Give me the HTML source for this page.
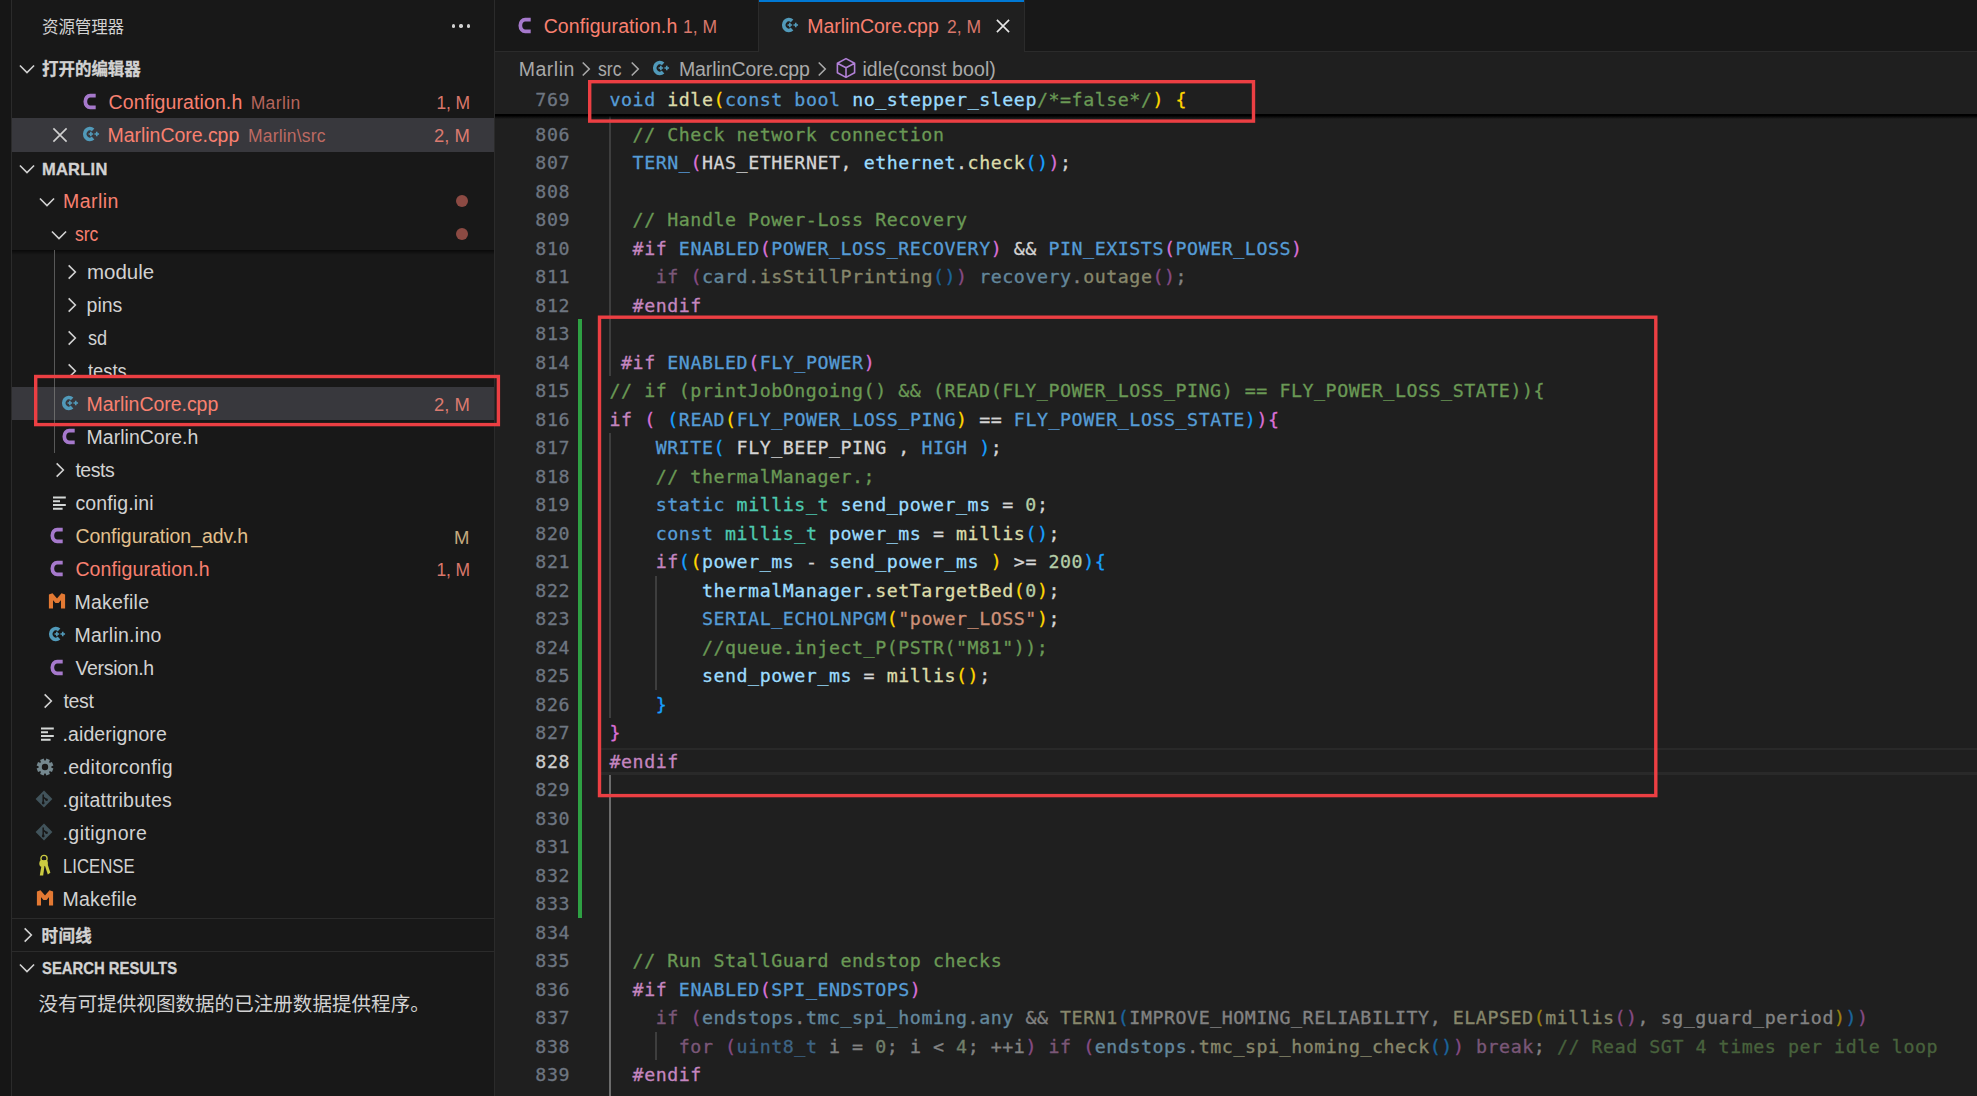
<!DOCTYPE html>
<html lang="zh-CN"><head><meta charset="utf-8"><title>MarlinCore.cpp - Marlin</title><style>
html,body{margin:0;padding:0;background:#1f1f1f}
body{width:1977px;height:1096px;overflow:hidden;position:relative;background:#1f1f1f;font-family:"Liberation Sans","Noto Sans CJK SC",sans-serif;-webkit-font-smoothing:antialiased}
.b{position:absolute;display:block}
.t{position:absolute;white-space:pre;font-family:"Liberation Sans","Noto Sans CJK SC",sans-serif}
.ln{position:absolute;left:500px;width:70px;text-align:right;height:28.5px;line-height:28.5px;font-family:"DejaVu Sans Mono","Liberation Mono",monospace;font-size:18.3px;letter-spacing:0.5438px;white-space:pre;-webkit-text-stroke-width:.3px}
.cl{position:absolute;left:609.5px;height:28.5px;line-height:28.5px;font-family:"DejaVu Sans Mono","Liberation Mono",monospace;font-size:18.3px;letter-spacing:0.5438px;white-space:pre;color:#d4d4d4;-webkit-text-stroke-width:.3px}
.dim{opacity:.55}
</style></head>
<body>
<div class="b" style="left:0px;top:0px;width:12px;height:1096px;background:#161616;"></div>
<div class="b" style="left:11px;top:0px;width:1px;height:1096px;background:#2b2b2b;"></div>
<div class="b" style="left:12px;top:0px;width:482px;height:1096px;background:#181818;"></div>
<div class="b" style="left:494px;top:0px;width:1px;height:1096px;background:#2b2b2b;"></div>
<div class="b" style="left:451.9px;top:24.4px;width:3.3px;height:3.3px;border-radius:50%;background:#d2d2d2"></div>
<div class="b" style="left:459.4px;top:24.4px;width:3.3px;height:3.3px;border-radius:50%;background:#d2d2d2"></div>
<div class="b" style="left:466.9px;top:24.4px;width:3.3px;height:3.3px;border-radius:50%;background:#d2d2d2"></div>
<svg class="b" style="left:17px;top:59px;" width="20" height="20" viewBox="0 0 20 20"><path d="M2.93 6.47 L10 13.53 L17.07 6.47" fill="none" stroke="#d2d2d2" stroke-width="1.6"/></svg>
<svg class="b" style="left:79.8px;top:92px;" width="20" height="20" viewBox="0 0 20 20"><path transform="translate(9.6 9.5)" d="M6.1 -5.95H0.6A4.85 5.6 0 0 0 -4.25 -0.35V0.35A4.85 5.6 0 0 0 0.6 5.95H6.1" fill="none" stroke="#a679cc" stroke-width="3.7"/></svg>
<div class="b" style="left:12px;top:117.8px;width:482px;height:33.8px;background:#38383d;"></div>
<svg class="b" style="left:50.1px;top:124.9px;" width="20" height="20" viewBox="0 0 20 20"><path d="M3.40 3.40 L16.60 16.60 M16.60 3.40 L3.40 16.60" fill="none" stroke="#d0d0d0" stroke-width="1.6"/></svg>
<svg class="b" style="left:78.6px;top:124.0px;" width="24" height="20" viewBox="0 0 24 20"><g transform="translate(10.85 10)" fill="none" stroke="#519aba"><path d="M3.27 -4.19A5.05 5.5 0 1 0 3.27 4.19" stroke-width="3.7"/><path d="M-1.3 0h4.6M1 -2.3v4.6M4.6 0h4.6M6.9 -2.3v4.6" stroke-width="1.6"/></g></svg>
<svg class="b" style="left:17px;top:158.7px;" width="20" height="20" viewBox="0 0 20 20"><path d="M2.93 6.47 L10 13.53 L17.07 6.47" fill="none" stroke="#d2d2d2" stroke-width="1.6"/></svg>
<svg class="b" style="left:36.5px;top:191.6px;" width="20" height="20" viewBox="0 0 20 20"><path d="M2.93 6.47 L10 13.53 L17.07 6.47" fill="none" stroke="#d2d2d2" stroke-width="1.6"/></svg>
<div class="b" style="left:456px;top:194.6px;width:12px;height:12px;border-radius:50%;background:#8c4a43"></div>
<svg class="b" style="left:48.5px;top:224.6px;" width="20" height="20" viewBox="0 0 20 20"><path d="M2.93 6.47 L10 13.53 L17.07 6.47" fill="none" stroke="#d2d2d2" stroke-width="1.6"/></svg>
<div class="b" style="left:456px;top:227.5px;width:12px;height:12px;border-radius:50%;background:#8c4a43"></div>
<div class="b" style="left:12px;top:250.3px;width:482px;height:5px;background:linear-gradient(rgba(0,0,0,.6),rgba(0,0,0,0));"></div>
<div class="b" style="left:54px;top:250.3px;width:1.2px;height:203.2px;background:#585858;"></div>
<svg class="b" style="left:61.5px;top:262.3px;" width="20" height="20" viewBox="0 0 20 20"><path d="M6.66 3.31 L13.34 10 L6.66 16.69" fill="none" stroke="#d2d2d2" stroke-width="1.6"/></svg>
<svg class="b" style="left:61.5px;top:295.3px;" width="20" height="20" viewBox="0 0 20 20"><path d="M6.66 3.31 L13.34 10 L6.66 16.69" fill="none" stroke="#d2d2d2" stroke-width="1.6"/></svg>
<svg class="b" style="left:61.5px;top:328.3px;" width="20" height="20" viewBox="0 0 20 20"><path d="M6.66 3.31 L13.34 10 L6.66 16.69" fill="none" stroke="#d2d2d2" stroke-width="1.6"/></svg>
<svg class="b" style="left:61.5px;top:361.3px;" width="20" height="20" viewBox="0 0 20 20"><path d="M6.66 3.31 L13.34 10 L6.66 16.69" fill="none" stroke="#d2d2d2" stroke-width="1.6"/></svg>
<div class="b" style="left:34px;top:375px;width:460px;height:12px;background:#181818;"></div>
<div class="b" style="left:54px;top:375px;width:1.2px;height:12px;background:#585858;"></div>
<div class="b" style="left:12px;top:387px;width:482px;height:33px;background:#38383d;"></div>
<div class="b" style="left:54px;top:387px;width:1.2px;height:33px;background:#6a6a6a;"></div>
<svg class="b" style="left:57.8px;top:393.1px;" width="24" height="20" viewBox="0 0 24 20"><g transform="translate(10.85 10)" fill="none" stroke="#519aba"><path d="M3.27 -4.19A5.05 5.5 0 1 0 3.27 4.19" stroke-width="3.7"/><path d="M-1.3 0h4.6M1 -2.3v4.6M4.6 0h4.6M6.9 -2.3v4.6" stroke-width="1.6"/></g></svg>
<svg class="b" style="left:58.8px;top:426.7px;" width="20" height="20" viewBox="0 0 20 20"><path transform="translate(9.6 9.5)" d="M6.1 -5.95H0.6A4.85 5.6 0 0 0 -4.25 -0.35V0.35A4.85 5.6 0 0 0 0.6 5.95H6.1" fill="none" stroke="#a679cc" stroke-width="3.7"/></svg>
<svg class="b" style="left:49.5px;top:460.3px;" width="20" height="20" viewBox="0 0 20 20"><path d="M6.66 3.31 L13.34 10 L6.66 16.69" fill="none" stroke="#d2d2d2" stroke-width="1.6"/></svg>
<svg class="b" style="left:53.1px;top:494.6px;" width="16" height="18" viewBox="0 0 16 18"><path d="M0 2.6h12.8M0 6.3h7M0 10h12.8M0 13.8h9.6" stroke="#d4d7d6" stroke-width="2" fill="none"/></svg>
<svg class="b" style="left:46.9px;top:525.8px;" width="20" height="20" viewBox="0 0 20 20"><path transform="translate(9.6 9.5)" d="M6.1 -5.95H0.6A4.85 5.6 0 0 0 -4.25 -0.35V0.35A4.85 5.6 0 0 0 0.6 5.95H6.1" fill="none" stroke="#a679cc" stroke-width="3.7"/></svg>
<svg class="b" style="left:46.9px;top:558.8px;" width="20" height="20" viewBox="0 0 20 20"><path transform="translate(9.6 9.5)" d="M6.1 -5.95H0.6A4.85 5.6 0 0 0 -4.25 -0.35V0.35A4.85 5.6 0 0 0 0.6 5.95H6.1" fill="none" stroke="#a679cc" stroke-width="3.7"/></svg>
<svg class="b" style="left:46.6px;top:591.3px;" width="20" height="20" viewBox="0 0 20 20"><path d="M3.95 17.4V3.6L10 10.6L16.05 3.6V17.4" fill="none" stroke="#e37933" stroke-width="4.1" stroke-linejoin="miter" stroke-miterlimit="1.2"/></svg>
<svg class="b" style="left:45.2px;top:623.7px;" width="24" height="20" viewBox="0 0 24 20"><g transform="translate(10.85 10)" fill="none" stroke="#519aba"><path d="M3.27 -4.19A5.05 5.5 0 1 0 3.27 4.19" stroke-width="3.7"/><path d="M-1.3 0h4.6M1 -2.3v4.6M4.6 0h4.6M6.9 -2.3v4.6" stroke-width="1.6"/></g></svg>
<svg class="b" style="left:46.9px;top:657.8px;" width="20" height="20" viewBox="0 0 20 20"><path transform="translate(9.6 9.5)" d="M6.1 -5.95H0.6A4.85 5.6 0 0 0 -4.25 -0.35V0.35A4.85 5.6 0 0 0 0.6 5.95H6.1" fill="none" stroke="#a679cc" stroke-width="3.7"/></svg>
<svg class="b" style="left:37.7px;top:691.3px;" width="20" height="20" viewBox="0 0 20 20"><path d="M6.66 3.31 L13.34 10 L6.66 16.69" fill="none" stroke="#d2d2d2" stroke-width="1.6"/></svg>
<svg class="b" style="left:41px;top:725.9px;" width="16" height="18" viewBox="0 0 16 18"><path d="M0 2.6h12.8M0 6.3h7M0 10h12.8M0 13.8h9.6" stroke="#d4d7d6" stroke-width="2" fill="none"/></svg>
<svg class="b" style="left:34.6px;top:756.6px;" width="20" height="20" viewBox="0 0 20 20"><g transform="translate(10 10)" fill="#75888f"><rect x="-1.9" y="-8.3" width="3.8" height="4" transform="rotate(22.5)"/><rect x="-1.9" y="-8.3" width="3.8" height="4" transform="rotate(67.5)"/><rect x="-1.9" y="-8.3" width="3.8" height="4" transform="rotate(112.5)"/><rect x="-1.9" y="-8.3" width="3.8" height="4" transform="rotate(157.5)"/><rect x="-1.9" y="-8.3" width="3.8" height="4" transform="rotate(202.5)"/><rect x="-1.9" y="-8.3" width="3.8" height="4" transform="rotate(247.5)"/><rect x="-1.9" y="-8.3" width="3.8" height="4" transform="rotate(292.5)"/><rect x="-1.9" y="-8.3" width="3.8" height="4" transform="rotate(337.5)"/><path fill-rule="evenodd" d="M0 -6.4A6.4 6.4 0 1 0 0 6.4A6.4 6.4 0 1 0 0 -6.4ZM0 -3.2A3.2 3.2 0 1 1 0 3.2A3.2 3.2 0 1 1 0 -3.2Z"/></g></svg>
<svg class="b" style="left:34.1px;top:789.4px;" width="20" height="20" viewBox="0 0 20 20"><path d="M10 1.6L18.4 10L10 18.4L1.6 10Z" fill="#41535b"/><path d="M9.2 5.6V13.6M9.2 8.2L12.4 10.6" stroke="#181818" stroke-width="1.5" fill="none"/><circle cx="9.2" cy="14" r="1.4" fill="#181818"/><circle cx="12.6" cy="10.8" r="1.3" fill="#181818"/></svg>
<svg class="b" style="left:34.1px;top:822.4px;" width="20" height="20" viewBox="0 0 20 20"><path d="M10 1.6L18.4 10L10 18.4L1.6 10Z" fill="#41535b"/><path d="M9.2 5.6V13.6M9.2 8.2L12.4 10.6" stroke="#181818" stroke-width="1.5" fill="none"/><circle cx="9.2" cy="14" r="1.4" fill="#181818"/><circle cx="12.6" cy="10.8" r="1.3" fill="#181818"/></svg>
<svg class="b" style="left:34.0px;top:852.9px;" width="20" height="24" viewBox="0 0 20 24"><circle cx="10" cy="5.4" r="3.1" fill="none" stroke="#cbcb41" stroke-width="1.3"/><path d="M8.4 7 L5.8 22.6 L9.2 22.6 L10.6 12 Z" fill="#cbcb41"/><path d="M9.4 8 L12.2 7 L16.4 19.8 L13.8 21.6 Z" fill="#cbcb41"/><ellipse cx="8.2" cy="10.4" rx="2.9" ry="3.4" fill="#cbcb41"/><ellipse cx="11.4" cy="10" rx="2.5" ry="3" fill="#cbcb41"/></svg>
<svg class="b" style="left:34.6px;top:888.2px;" width="20" height="20" viewBox="0 0 20 20"><path d="M3.95 17.4V3.6L10 10.6L16.05 3.6V17.4" fill="none" stroke="#e37933" stroke-width="4.1" stroke-linejoin="miter" stroke-miterlimit="1.2"/></svg>
<div class="b" style="left:12px;top:917.5px;width:482px;height:1.2px;background:#2b2b2b;"></div>
<svg class="b" style="left:17.7px;top:925px;" width="20" height="20" viewBox="0 0 20 20"><path d="M6.66 3.31 L13.34 10 L6.66 16.69" fill="none" stroke="#d2d2d2" stroke-width="1.6"/></svg>
<div class="b" style="left:12px;top:950.8px;width:482px;height:1.2px;background:#2b2b2b;"></div>
<svg class="b" style="left:17px;top:958.3px;" width="20" height="20" viewBox="0 0 20 20"><path d="M2.93 6.47 L10 13.53 L17.07 6.47" fill="none" stroke="#d2d2d2" stroke-width="1.6"/></svg>
<div class="b" style="left:495px;top:0px;width:1482px;height:50.8px;background:#181818;"></div>
<div class="b" style="left:495px;top:50.8px;width:1482px;height:1.2px;background:#2b2b2b;"></div>
<div class="b" style="left:757.8px;top:0px;width:1.2px;height:52px;background:#2b2b2b;"></div>
<div class="b" style="left:759px;top:0px;width:264.6px;height:52px;background:#1f1f1f;"></div>
<div class="b" style="left:759px;top:0px;width:264.6px;height:1.5px;background:#0078d4;"></div>
<div class="b" style="left:1023.6px;top:0px;width:1.2px;height:52px;background:#2b2b2b;"></div>
<svg class="b" style="left:514.7px;top:15.7px;" width="20" height="20" viewBox="0 0 20 20"><path transform="translate(9.6 9.5)" d="M6.1 -5.95H0.6A4.85 5.6 0 0 0 -4.25 -0.35V0.35A4.85 5.6 0 0 0 0.6 5.95H6.1" fill="none" stroke="#a679cc" stroke-width="3.7"/></svg>
<svg class="b" style="left:778.2px;top:14.8px;" width="24" height="20" viewBox="0 0 24 20"><g transform="translate(10.85 10)" fill="none" stroke="#519aba"><path d="M3.27 -4.19A5.05 5.5 0 1 0 3.27 4.19" stroke-width="3.7"/><path d="M-1.3 0h4.6M1 -2.3v4.6M4.6 0h4.6M6.9 -2.3v4.6" stroke-width="1.6"/></g></svg>
<svg class="b" style="left:992.5px;top:16.2px;" width="20" height="20" viewBox="0 0 20 20"><path d="M3.90 3.90 L16.10 16.10 M16.10 3.90 L3.90 16.10" fill="none" stroke="#e6e6e6" stroke-width="1.6"/></svg>
<svg class="b" style="left:576.2px;top:59.2px;" width="20" height="20" viewBox="0 0 20 20"><path d="M6.73 3.46 L13.27 10 L6.73 16.54" fill="none" stroke="#a9a9a9" stroke-width="1.6"/></svg>
<svg class="b" style="left:624.6px;top:59.2px;" width="20" height="20" viewBox="0 0 20 20"><path d="M6.73 3.46 L13.27 10 L6.73 16.54" fill="none" stroke="#a9a9a9" stroke-width="1.6"/></svg>
<svg class="b" style="left:649.4px;top:58.0px;" width="24" height="20" viewBox="0 0 24 20"><g transform="translate(10.85 10)" fill="none" stroke="#519aba"><path d="M3.27 -4.19A5.05 5.5 0 1 0 3.27 4.19" stroke-width="3.7"/><path d="M-1.3 0h4.6M1 -2.3v4.6M4.6 0h4.6M6.9 -2.3v4.6" stroke-width="1.6"/></g></svg>
<svg class="b" style="left:812.3px;top:59.2px;" width="20" height="20" viewBox="0 0 20 20"><path d="M6.73 3.46 L13.27 10 L6.73 16.54" fill="none" stroke="#a9a9a9" stroke-width="1.6"/></svg>
<svg class="b" style="left:835.2px;top:56.8px;" width="22" height="22" viewBox="0 0 22 22"><path d="M11 1.6L19.6 6.2V15.8L11 20.4L2.4 15.8V6.2ZM2.4 6.2L11 10.8L19.6 6.2M11 10.8V20.4" fill="none" stroke="#b180d7" stroke-width="1.6" stroke-linejoin="round"/></svg>
<div class="b" style="left:608.9px;top:91.25px;width:1.9px;height:285.0px;background:#3e3e3e;"></div>
<div class="b" style="left:608.9px;top:433.25px;width:1.9px;height:285.0px;background:#3e3e3e;"></div>
<div class="b" style="left:608.9px;top:775.25px;width:1.9px;height:342.0px;background:#6c6c6c;"></div>
<div class="b" style="left:655.1px;top:575.75px;width:1.9px;height:114.0px;background:#3e3e3e;"></div>
<div class="b" style="left:655.1px;top:1031.75px;width:1.9px;height:28.5px;background:#3e3e3e;"></div>
<div class="b" style="left:598px;top:747.8px;width:1379px;height:2.4px;background:#292929;"></div>
<div class="b" style="left:598px;top:772.4px;width:1379px;height:2.4px;background:#292929;"></div>
<div class="b" style="left:578px;top:319.25px;width:4.3px;height:598.5px;background:#2ea043;"></div>
<span class="t" style="left:42.00px;top:11.00px;line-height:33px;font-size:16.5px;color:#d2d2d2;font-weight:normal;letter-spacing:-0.100px;">资源管理器</span>
<span class="t" style="left:42.00px;top:53.00px;line-height:33px;font-size:16.5px;color:#d2d2d2;font-weight:bold;letter-spacing:-0.040px;-webkit-text-stroke-width:.3px;">打开的编辑器</span>
<span class="t" style="left:108.60px;top:85.50px;line-height:33px;font-size:19.5px;color:#f88070;font-weight:normal;letter-spacing:0.099px;">Configuration.h</span>
<span class="t" style="left:250.70px;top:87.30px;line-height:33px;font-size:17.5px;color:#b5655c;font-weight:normal;letter-spacing:0.357px;">Marlin</span>
<span class="t" style="left:436.40px;top:87.10px;line-height:33px;font-size:17.5px;color:#d9776b;font-weight:normal;letter-spacing:-0.086px;">1, M</span>
<span class="t" style="left:107.60px;top:118.50px;line-height:33px;font-size:19.5px;color:#f88070;font-weight:normal;letter-spacing:-0.044px;">MarlinCore.cpp</span>
<span class="t" style="left:248.00px;top:120.30px;line-height:33px;font-size:17.5px;color:#bd6a62;font-weight:normal;letter-spacing:0.190px;">Marlin\src</span>
<span class="t" style="left:434.30px;top:120.10px;line-height:33px;font-size:17.5px;color:#db7a6f;font-weight:normal;transform:scaleX(1.0551);transform-origin:0 50%;">2, M</span>
<span class="t" style="left:42.00px;top:152.70px;line-height:33px;font-size:16.5px;color:#d2d2d2;font-weight:bold;letter-spacing:0.232px;-webkit-text-stroke-width:.3px;">MARLIN</span>
<span class="t" style="left:63.00px;top:184.50px;line-height:33px;font-size:19.5px;color:#f88070;font-weight:normal;letter-spacing:0.471px;">Marlin</span>
<span class="t" style="left:75.40px;top:217.50px;line-height:33px;font-size:19.5px;color:#f88070;font-weight:normal;transform:scaleX(0.8993);transform-origin:0 50%;">src</span>
<span class="t" style="left:86.55px;top:255.50px;line-height:33px;font-size:19.5px;color:#d2d2d2;font-weight:normal;transform:scaleX(1.0497);transform-origin:0 50%;">module</span>
<span class="t" style="left:86.60px;top:288.50px;line-height:33px;font-size:19.5px;color:#d2d2d2;font-weight:normal;letter-spacing:-0.007px;">pins</span>
<span class="t" style="left:87.60px;top:321.50px;line-height:33px;font-size:19.5px;color:#d2d2d2;font-weight:normal;transform:scaleX(0.9316);transform-origin:0 50%;">sd</span>
<span class="t" style="left:87.60px;top:354.50px;line-height:33px;font-size:19.5px;color:#d2d2d2;font-weight:normal;transform:scaleX(0.9389);transform-origin:0 50%;">tests</span>
<span class="t" style="left:86.60px;top:387.50px;line-height:33px;font-size:19.5px;color:#f88070;font-weight:normal;letter-spacing:-0.044px;">MarlinCore.cpp</span>
<span class="t" style="left:434.30px;top:389.10px;line-height:33px;font-size:17.5px;color:#db7a6f;font-weight:normal;transform:scaleX(1.0551);transform-origin:0 50%;">2, M</span>
<span class="t" style="left:86.60px;top:420.50px;line-height:33px;font-size:19.5px;color:#d2d2d2;font-weight:normal;letter-spacing:0.011px;">MarlinCore.h</span>
<span class="t" style="left:75.40px;top:453.50px;line-height:33px;font-size:19.5px;color:#d2d2d2;font-weight:normal;letter-spacing:-0.458px;">tests</span>
<span class="t" style="left:75.40px;top:486.50px;line-height:33px;font-size:19.5px;color:#d2d2d2;font-weight:normal;letter-spacing:0.141px;">config.ini</span>
<span class="t" style="left:75.40px;top:519.50px;line-height:33px;font-size:19.5px;color:#e2c08d;font-weight:normal;letter-spacing:-0.019px;">Configuration_adv.h</span>
<span class="t" style="left:454.05px;top:521.10px;line-height:33px;font-size:18.5px;color:#c4aa7f;font-weight:normal;">M</span>
<span class="t" style="left:75.40px;top:552.50px;line-height:33px;font-size:19.5px;color:#f88070;font-weight:normal;letter-spacing:0.135px;">Configuration.h</span>
<span class="t" style="left:436.40px;top:554.10px;line-height:33px;font-size:17.5px;color:#d9776b;font-weight:normal;letter-spacing:-0.086px;">1, M</span>
<span class="t" style="left:74.40px;top:585.50px;line-height:33px;font-size:19.5px;color:#d2d2d2;font-weight:normal;letter-spacing:0.291px;">Makefile</span>
<span class="t" style="left:74.40px;top:618.50px;line-height:33px;font-size:19.5px;color:#d2d2d2;font-weight:normal;letter-spacing:0.268px;">Marlin.ino</span>
<span class="t" style="left:75.40px;top:651.50px;line-height:33px;font-size:19.5px;color:#d2d2d2;font-weight:normal;letter-spacing:-0.320px;">Version.h</span>
<span class="t" style="left:63.40px;top:684.50px;line-height:33px;font-size:19.5px;color:#d2d2d2;font-weight:normal;letter-spacing:-0.304px;">test</span>
<span class="t" style="left:62.40px;top:717.50px;line-height:33px;font-size:19.5px;color:#d2d2d2;font-weight:normal;letter-spacing:0.133px;">.aiderignore</span>
<span class="t" style="left:62.40px;top:750.50px;line-height:33px;font-size:19.5px;color:#d2d2d2;font-weight:normal;letter-spacing:0.326px;">.editorconfig</span>
<span class="t" style="left:62.50px;top:783.50px;line-height:33px;font-size:19.5px;color:#d2d2d2;font-weight:normal;letter-spacing:0.233px;">.gitattributes</span>
<span class="t" style="left:62.50px;top:816.50px;line-height:33px;font-size:19.5px;color:#d2d2d2;font-weight:normal;letter-spacing:0.447px;">.gitignore</span>
<span class="t" style="left:62.64px;top:849.50px;line-height:33px;font-size:19.5px;color:#d2d2d2;font-weight:normal;transform:scaleX(0.8588);transform-origin:0 50%;">LICENSE</span>
<span class="t" style="left:62.50px;top:882.50px;line-height:33px;font-size:19.5px;color:#d2d2d2;font-weight:normal;letter-spacing:0.233px;">Makefile</span>
<span class="t" style="left:41.60px;top:919.80px;line-height:33px;font-size:16.5px;color:#d2d2d2;font-weight:bold;letter-spacing:0.350px;-webkit-text-stroke-width:.3px;">时间线</span>
<span class="t" style="left:41.90px;top:952.20px;line-height:33px;font-size:16.5px;color:#d2d2d2;font-weight:bold;-webkit-text-stroke-width:.3px;transform:scaleX(0.9005);transform-origin:0 50%;">SEARCH RESULTS</span>
<span class="t" style="left:38.50px;top:988.10px;line-height:33px;font-size:19.5px;color:#d2d2d2;font-weight:normal;letter-spacing:0.063px;">没有可提供视图数据的已注册数据提供程序。</span>
<span class="t" style="left:543.70px;top:10.20px;line-height:33px;font-size:19.5px;color:#f88070;font-weight:normal;letter-spacing:0.092px;">Configuration.h</span>
<span class="t" style="left:683.00px;top:10.50px;line-height:33px;font-size:17.5px;color:#d9776b;font-weight:normal;letter-spacing:0.014px;">1, M</span>
<span class="t" style="left:807.30px;top:10.20px;line-height:33px;font-size:19.5px;color:#f88070;font-weight:normal;letter-spacing:-0.059px;">MarlinCore.cpp</span>
<span class="t" style="left:947.00px;top:10.50px;line-height:33px;font-size:17.5px;color:#d9776b;font-weight:normal;letter-spacing:-0.019px;">2, M</span>
<span class="t" style="left:518.80px;top:52.80px;line-height:33px;font-size:19.5px;color:#a9a9a9;font-weight:normal;letter-spacing:0.491px;">Marlin</span>
<span class="t" style="left:598.30px;top:52.80px;line-height:33px;font-size:19.5px;color:#a9a9a9;font-weight:normal;transform:scaleX(0.9031);transform-origin:0 50%;">src</span>
<span class="t" style="left:678.90px;top:52.80px;line-height:33px;font-size:19.5px;color:#a9a9a9;font-weight:normal;letter-spacing:-0.090px;">MarlinCore.cpp</span>
<span class="t" style="left:862.40px;top:52.80px;line-height:33px;font-size:19.5px;color:#a9a9a9;font-weight:normal;letter-spacing:0.077px;">idle(const bool)</span>
<div class="ln" style="top:120.65px;color:#6e7681">806</div>
<div class="cl" style="top:120.65px"><span style="color:#6a9955">  // Check network connection</span></div>
<div class="ln" style="top:149.15px;color:#6e7681">807</div>
<div class="cl" style="top:149.15px">  <span style="color:#569cd6">TERN_</span><span style="color:#da70d6">(</span><span style="color:#d4d4d4">HAS_ETHERNET, </span><span style="color:#9cdcfe">ethernet</span><span style="color:#d4d4d4">.</span><span style="color:#dcdcaa">check</span><span style="color:#179fff">()</span><span style="color:#da70d6">)</span><span style="color:#d4d4d4">;</span></div>
<div class="ln" style="top:177.65px;color:#6e7681">808</div>
<div class="ln" style="top:206.15px;color:#6e7681">809</div>
<div class="cl" style="top:206.15px"><span style="color:#6a9955">  // Handle Power-Loss Recovery</span></div>
<div class="ln" style="top:234.65px;color:#6e7681">810</div>
<div class="cl" style="top:234.65px">  <span style="color:#c586c0">#if</span> <span style="color:#569cd6">ENABLED</span><span style="color:#da70d6">(</span><span style="color:#569cd6">POWER_LOSS_RECOVERY</span><span style="color:#da70d6">)</span><span style="color:#d4d4d4"> &amp;&amp; </span><span style="color:#569cd6">PIN_EXISTS</span><span style="color:#da70d6">(</span><span style="color:#569cd6">POWER_LOSS</span><span style="color:#da70d6">)</span></div>
<div class="ln" style="top:263.15px;color:#6e7681">811</div>
<div class="cl dim" style="top:263.15px">    <span style="color:#c586c0">if</span> <span style="color:#da70d6">(</span><span style="color:#9cdcfe">card</span><span style="color:#d4d4d4">.</span><span style="color:#dcdcaa">isStillPrinting</span><span style="color:#179fff">()</span><span style="color:#da70d6">)</span> <span style="color:#9cdcfe">recovery</span><span style="color:#d4d4d4">.</span><span style="color:#dcdcaa">outage</span><span style="color:#da70d6">()</span><span style="color:#d4d4d4">;</span></div>
<div class="ln" style="top:291.65px;color:#6e7681">812</div>
<div class="cl" style="top:291.65px">  <span style="color:#c586c0">#endif</span></div>
<div class="ln" style="top:320.15px;color:#6e7681">813</div>
<div class="ln" style="top:348.65px;color:#6e7681">814</div>
<div class="cl" style="top:348.65px"> <span style="color:#c586c0">#if</span> <span style="color:#569cd6">ENABLED</span><span style="color:#da70d6">(</span><span style="color:#569cd6">FLY_POWER</span><span style="color:#da70d6">)</span></div>
<div class="ln" style="top:377.15px;color:#6e7681">815</div>
<div class="cl" style="top:377.15px"><span style="color:#6a9955">// if (printJobOngoing() &amp;&amp; (READ(FLY_POWER_LOSS_PING) == FLY_POWER_LOSS_STATE)){</span></div>
<div class="ln" style="top:405.65px;color:#6e7681">816</div>
<div class="cl" style="top:405.65px"><span style="color:#c586c0">if</span> <span style="color:#da70d6">(</span> <span style="color:#179fff">(</span><span style="color:#569cd6">READ</span><span style="color:#ffd700">(</span><span style="color:#569cd6">FLY_POWER_LOSS_PING</span><span style="color:#ffd700">)</span><span style="color:#d4d4d4"> == </span><span style="color:#569cd6">FLY_POWER_LOSS_STATE</span><span style="color:#179fff">)</span><span style="color:#da70d6">)</span><span style="color:#da70d6">{</span></div>
<div class="ln" style="top:434.15px;color:#6e7681">817</div>
<div class="cl" style="top:434.15px">    <span style="color:#569cd6">WRITE</span><span style="color:#179fff">(</span><span style="color:#d4d4d4"> FLY_BEEP_PING , </span><span style="color:#569cd6">HIGH</span> <span style="color:#179fff">)</span><span style="color:#d4d4d4">;</span></div>
<div class="ln" style="top:462.65px;color:#6e7681">818</div>
<div class="cl" style="top:462.65px"><span style="color:#6a9955">    // thermalManager.;</span></div>
<div class="ln" style="top:491.15px;color:#6e7681">819</div>
<div class="cl" style="top:491.15px">    <span style="color:#569cd6">static</span> <span style="color:#4ec9b0">millis_t</span> <span style="color:#9cdcfe">send_power_ms</span><span style="color:#d4d4d4"> = </span><span style="color:#b5cea8">0</span><span style="color:#d4d4d4">;</span></div>
<div class="ln" style="top:519.65px;color:#6e7681">820</div>
<div class="cl" style="top:519.65px">    <span style="color:#569cd6">const</span> <span style="color:#4ec9b0">millis_t</span> <span style="color:#9cdcfe">power_ms</span><span style="color:#d4d4d4"> = </span><span style="color:#dcdcaa">millis</span><span style="color:#179fff">()</span><span style="color:#d4d4d4">;</span></div>
<div class="ln" style="top:548.15px;color:#6e7681">821</div>
<div class="cl" style="top:548.15px">    <span style="color:#c586c0">if</span><span style="color:#179fff">(</span><span style="color:#ffd700">(</span><span style="color:#9cdcfe">power_ms</span><span style="color:#d4d4d4"> - </span><span style="color:#9cdcfe">send_power_ms</span> <span style="color:#ffd700">)</span><span style="color:#d4d4d4"> &gt;= </span><span style="color:#b5cea8">200</span><span style="color:#179fff">)</span><span style="color:#179fff">{</span></div>
<div class="ln" style="top:576.65px;color:#6e7681">822</div>
<div class="cl" style="top:576.65px">        <span style="color:#9cdcfe">thermalManager</span><span style="color:#d4d4d4">.</span><span style="color:#dcdcaa">setTargetBed</span><span style="color:#ffd700">(</span><span style="color:#b5cea8">0</span><span style="color:#ffd700">)</span><span style="color:#d4d4d4">;</span></div>
<div class="ln" style="top:605.15px;color:#6e7681">823</div>
<div class="cl" style="top:605.15px">        <span style="color:#569cd6">SERIAL_ECHOLNPGM</span><span style="color:#ffd700">(</span><span style="color:#ce9178">"power_LOSS"</span><span style="color:#ffd700">)</span><span style="color:#d4d4d4">;</span></div>
<div class="ln" style="top:633.65px;color:#6e7681">824</div>
<div class="cl" style="top:633.65px"><span style="color:#6a9955">        //queue.inject_P(PSTR("M81"));</span></div>
<div class="ln" style="top:662.15px;color:#6e7681">825</div>
<div class="cl" style="top:662.15px">        <span style="color:#9cdcfe">send_power_ms</span><span style="color:#d4d4d4"> = </span><span style="color:#dcdcaa">millis</span><span style="color:#ffd700">()</span><span style="color:#d4d4d4">;</span></div>
<div class="ln" style="top:690.65px;color:#6e7681">826</div>
<div class="cl" style="top:690.65px">    <span style="color:#179fff">}</span></div>
<div class="ln" style="top:719.15px;color:#6e7681">827</div>
<div class="cl" style="top:719.15px"><span style="color:#da70d6">}</span></div>
<div class="ln" style="top:747.65px;color:#cccccc">828</div>
<div class="cl" style="top:747.65px"><span style="color:#c586c0">#endif</span></div>
<div class="ln" style="top:776.15px;color:#6e7681">829</div>
<div class="ln" style="top:804.65px;color:#6e7681">830</div>
<div class="ln" style="top:833.15px;color:#6e7681">831</div>
<div class="ln" style="top:861.65px;color:#6e7681">832</div>
<div class="ln" style="top:890.15px;color:#6e7681">833</div>
<div class="ln" style="top:918.65px;color:#6e7681">834</div>
<div class="ln" style="top:947.15px;color:#6e7681">835</div>
<div class="cl" style="top:947.15px"><span style="color:#6a9955">  // Run StallGuard endstop checks</span></div>
<div class="ln" style="top:975.65px;color:#6e7681">836</div>
<div class="cl" style="top:975.65px">  <span style="color:#c586c0">#if</span> <span style="color:#569cd6">ENABLED</span><span style="color:#da70d6">(</span><span style="color:#569cd6">SPI_ENDSTOPS</span><span style="color:#da70d6">)</span></div>
<div class="ln" style="top:1004.15px;color:#6e7681">837</div>
<div class="cl dim" style="top:1004.15px">    <span style="color:#c586c0">if</span> <span style="color:#da70d6">(</span><span style="color:#9cdcfe">endstops</span><span style="color:#d4d4d4">.</span><span style="color:#9cdcfe">tmc_spi_homing</span><span style="color:#d4d4d4">.</span><span style="color:#9cdcfe">any</span><span style="color:#d4d4d4"> &amp;&amp; </span><span style="color:#dcdcaa">TERN1</span><span style="color:#179fff">(</span><span style="color:#d4d4d4">IMPROVE_HOMING_RELIABILITY, </span><span style="color:#dcdcaa">ELAPSED</span><span style="color:#ffd700">(</span><span style="color:#dcdcaa">millis</span><span style="color:#da70d6">()</span><span style="color:#d4d4d4">, sg_guard_period</span><span style="color:#ffd700">)</span><span style="color:#179fff">)</span><span style="color:#da70d6">)</span></div>
<div class="ln" style="top:1032.65px;color:#6e7681">838</div>
<div class="cl dim" style="top:1032.65px">      <span style="color:#c586c0">for</span> <span style="color:#da70d6">(</span><span style="color:#569cd6">uint8_t</span><span style="color:#d4d4d4"> i = </span><span style="color:#b5cea8">0</span><span style="color:#d4d4d4">; i &lt; </span><span style="color:#b5cea8">4</span><span style="color:#d4d4d4">; ++i</span><span style="color:#da70d6">)</span> <span style="color:#c586c0">if</span> <span style="color:#da70d6">(</span><span style="color:#9cdcfe">endstops</span><span style="color:#d4d4d4">.</span><span style="color:#dcdcaa">tmc_spi_homing_check</span><span style="color:#179fff">()</span><span style="color:#da70d6">)</span> <span style="color:#c586c0">break</span><span style="color:#d4d4d4">; </span><span style="color:#6a9955">// Read SGT 4 times per idle loop</span></div>
<div class="ln" style="top:1061.15px;color:#6e7681">839</div>
<div class="cl" style="top:1061.15px">  <span style="color:#c586c0">#endif</span></div>
<div class="b" style="left:495px;top:84.5px;width:1482px;height:29.3px;background:#1f1f1f"></div>
<div class="b" style="left:495px;top:113.8px;width:1482px;height:5.4px;background:linear-gradient(#000 0,#000 32%,rgba(0,0,0,0) 100%)"></div>
<div class="ln" style="top:86.20px;color:#6e7681">769</div>
<div class="cl" style="top:86.20px"><span style="color:#569cd6">void</span> <span style="color:#dcdcaa">idle</span><span style="color:#ffd700">(</span><span style="color:#569cd6">const</span> <span style="color:#569cd6">bool</span> <span style="color:#9cdcfe">no_stepper_sleep</span><span style="color:#6a9955">/*=false*/</span><span style="color:#ffd700">)</span> <span style="color:#ffd700">{</span></div>
<svg class="b" style="left:0;top:0" width="1977" height="1096"><rect x="589.70" y="81.70" width="663.80" height="39.40" fill="none" stroke="#ec3f43" stroke-width="3.4"/><rect x="599.50" y="317.20" width="1056.30" height="478.40" fill="none" stroke="#ec3f43" stroke-width="3.4"/><rect x="35.70" y="376.50" width="462.70" height="48.10" fill="none" stroke="#ec3f43" stroke-width="3.4"/></svg>
</body></html>
